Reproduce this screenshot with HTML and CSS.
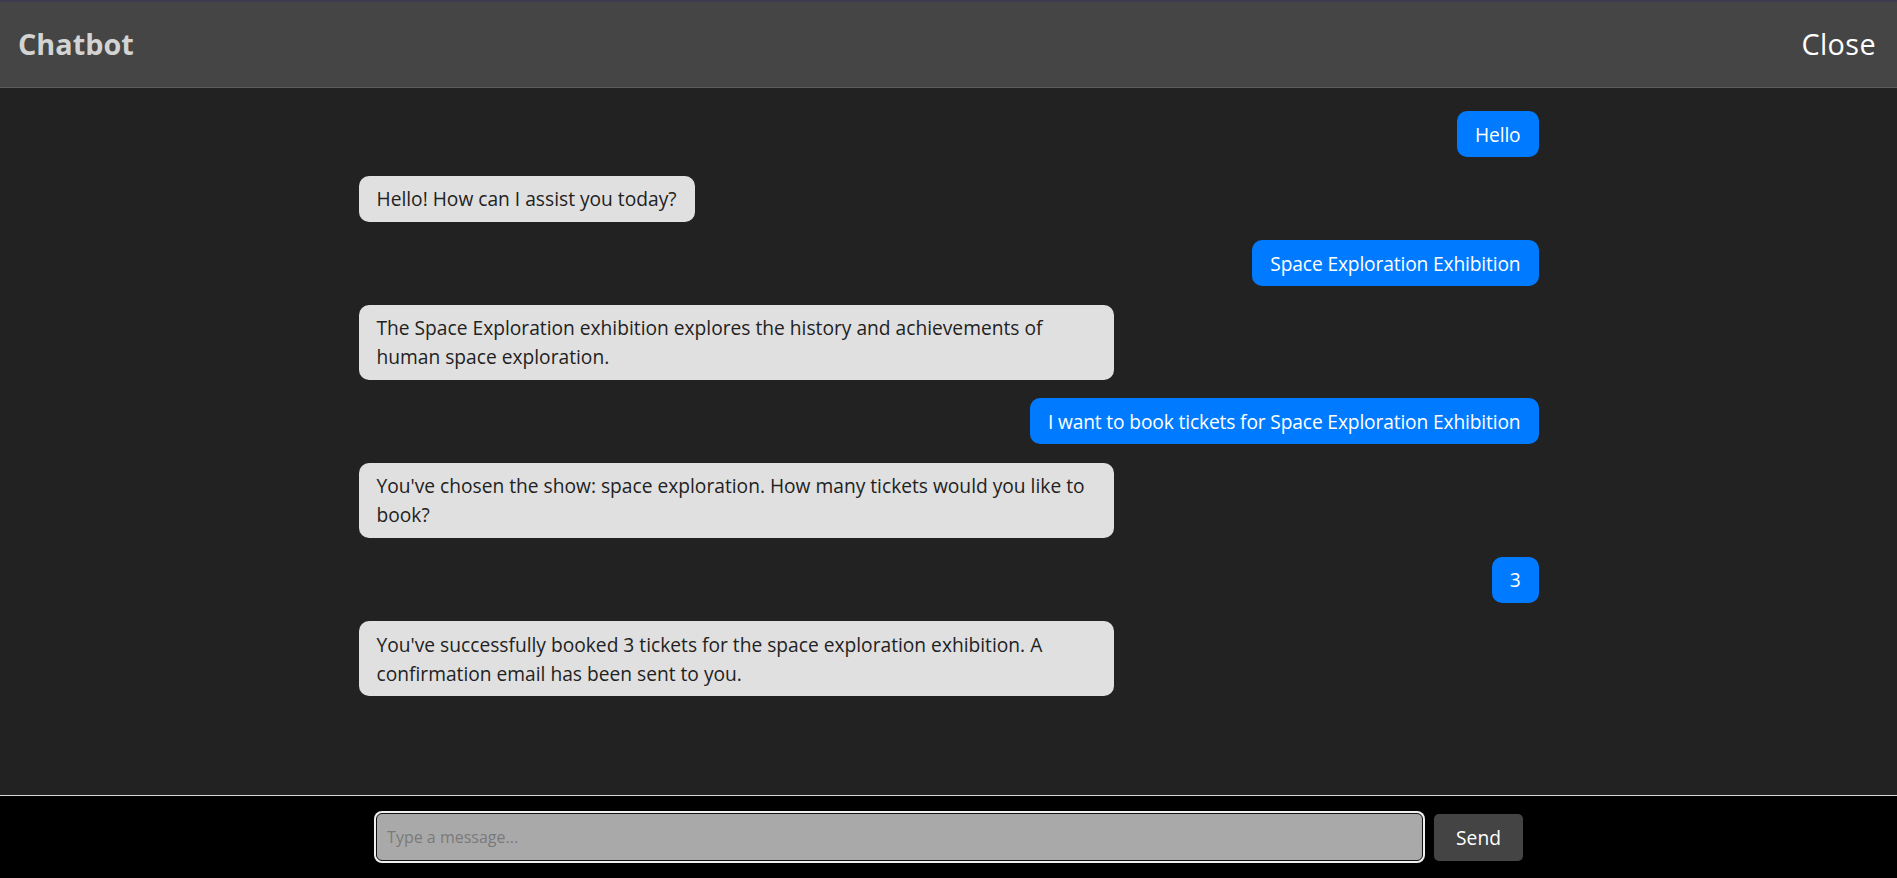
FILE: index.html
```html
<!DOCTYPE html>
<html lang="en">
<head>
<meta charset="utf-8">
<title>Chatbot</title>
<link rel="stylesheet" href="styles.css">
</head>
<body>
<div class="app">
  <header class="header">
    <h1 class="title">Chatbot</h1>
    <button class="close-btn">Close</button>
  </header>
  <main class="chat">
    <div class="messages">
      <div class="msg user">Hello</div>
      <div class="msg bot">Hello! How can I assist you today?</div>
      <div class="msg user">Space Exploration Exhibition</div>
      <div class="msg bot">The Space Exploration exhibition explores the history and achievements of human space exploration.</div>
      <div class="msg user">I want to book tickets for Space Exploration Exhibition</div>
      <div class="msg bot">You've chosen the show: space exploration. How many tickets would you like to book?</div>
      <div class="msg user">3</div>
      <div class="msg bot">You've successfully booked 3 tickets for the space exploration exhibition. A confirmation email has been sent to you.</div>
    </div>
  </main>
  <footer class="composer">
    <input class="composer-input" type="text" placeholder="Type a message...">
    <button class="send-btn">Send</button>
  </footer>
</div>
</body>
</html>
```
FILE: styles.css
```css
* { box-sizing: border-box; }

html, body {
  margin: 0;
  padding: 0;
  height: 100%;
}

body {
  background: #222222;
  font-family: "Open Sans", "Noto Sans", sans-serif;
  overflow: hidden;
}

.app {
  display: flex;
  flex-direction: column;
  height: 878px;
}

.header {
  flex: 0 0 88px;
  display: flex;
  align-items: center;
  justify-content: space-between;
  background: #454545;
  border-top: 2px solid #3c3c4e;
  border-bottom: 1px solid #5c5c5c;
  padding: 0 21px 0 18px;
}

.title {
  margin: 0;
  font-size: 28.8px;
  font-weight: 700;
  color: #d3d3d3;
  line-height: 1;
}

.close-btn {
  background: none;
  border: none;
  padding: 0;
  font-family: inherit;
  font-size: 28.8px;
  font-weight: 400;
  letter-spacing: 0.4px;
  color: #ffffff;
  line-height: 1;
}

.chat {
  flex: 1;
  overflow: hidden;
  padding-top: 23px;
}

.messages {
  width: 1180px;
  margin: 0 auto;
  display: flex;
  flex-direction: column;
  gap: 18.6px;
}

.msg {
  max-width: 755px;
  padding: 8.5px 18px;
  border-radius: 10px;
  font-size: 19.2px;
  line-height: 29px;
}

.msg.user {
  align-self: flex-end;
  background: #007bff;
  color: #ffffff;
  font-weight: 500;
  letter-spacing: -0.14px;
}

.msg.bot {
  align-self: flex-start;
  background: #e0e0e0;
  color: #222222;
  font-weight: 400;
}

.composer {
  flex: 0 0 83px;
  display: flex;
  align-items: center;
  justify-content: center;
  gap: 9px;
  background: #000000;
  border-top: 1px solid #d8d8d8;
}

.composer-input {
  width: 1047px;
  height: 48px;
  margin: 2px;
  padding: 0 10px;
  background: #a9a9a9;
  border: 1px solid #111111;
  border-radius: 6px;
  box-shadow: 0 0 0 2px #f0f0f0;
  font-family: inherit;
  font-size: 16px;
  color: #222222;
  outline: none;
}

.composer-input::placeholder {
  color: #7a7a7a;
}

.send-btn {
  height: 47px;
  padding: 0 22px;
  background: #444444;
  color: #ffffff;
  border: none;
  border-radius: 5px;
  font-family: inherit;
  font-size: 19.2px;
}
```
